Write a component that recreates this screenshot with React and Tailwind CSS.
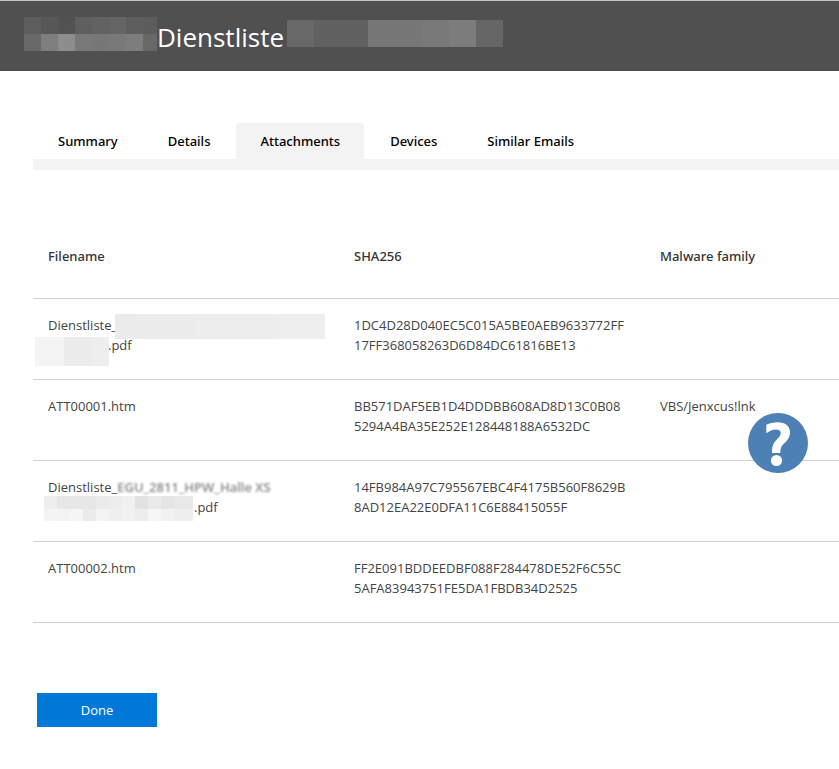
import React, { useState } from "react";

const tabs = ["Summary", "Details", "Attachments", "Devices", "Similar Emails"];

// mosaic tiles: [x, y, width, height, color]
const titleStart = [
  [0, 0, 17, 17, "#5d5d5d"],
  [17, 0, 17, 17, "#575757"],
  [34, 0, 17, 17, "#525252"],
  [51, 0, 17, 17, "#5f5f5f"],
  [68, 0, 17, 17, "#626262"],
  [85, 0, 17, 17, "#656565"],
  [102, 0, 17, 17, "#5e5e5e"],
  [119, 0, 14, 17, "#5c5c5c"],
  [0, 17, 17, 17, "#696969"],
  [17, 17, 17, 17, "#7e7e7e"],
  [34, 17, 17, 17, "#8d8d8d"],
  [51, 17, 17, 17, "#797979"],
  [68, 17, 17, 17, "#777777"],
  [85, 17, 17, 17, "#797979"],
  [102, 17, 17, 17, "#7d7d7d"],
  [119, 17, 14, 17, "#686868"],
];

const titleEnd = [
  [0, 0, 27, 27, "#686868"],
  [27, 0, 54, 27, "#616161"],
  [81, 0, 54, 27, "#777777"],
  [135, 0, 27, 27, "#797979"],
  [162, 0, 27, 27, "#7c7c7c"],
  [189, 0, 27, 27, "#666666"],
];

const firstNameEnd = [
  [0, 0, 27, 25, "#ebebeb"],
  [27, 0, 54, 25, "#ececec"],
  [81, 0, 81, 25, "#ededed"],
  [162, 0, 48, 25, "#eeeeee"],
];

const firstSecondLine = [
  [0, 0, 29, 29, "#f4f4f4"],
  [29, 0, 29, 29, "#ececec"],
  [58, 0, 16, 29, "#eeeeee"],
];

const thirdSecondLine = [
  [0, 0, 13, 13, "#eeeeee"],
  [13, 0, 39, 13, "#e7e7e7"],
  [52, 0, 13, 13, "#ebebeb"],
  [65, 0, 13, 13, "#ededed"],
  [78, 0, 13, 13, "#f1f1f1"],
  [91, 0, 13, 13, "#e2e2e2"],
  [104, 0, 13, 13, "#eaeaea"],
  [117, 0, 13, 13, "#e5e5e5"],
  [130, 0, 19, 13, "#e8e8e8"],
  [0, 13, 13, 12, "#f4f4f4"],
  [13, 13, 13, 12, "#f3f3f3"],
  [26, 13, 13, 12, "#f5f5f5"],
  [39, 13, 13, 12, "#ebebeb"],
  [52, 13, 13, 12, "#f4f4f4"],
  [65, 13, 13, 12, "#efefef"],
  [78, 13, 13, 12, "#f1f1f1"],
  [91, 13, 13, 12, "#ededed"],
  [104, 13, 13, 12, "#f6f6f6"],
  [117, 13, 13, 12, "#f2f2f2"],
  [130, 13, 19, 12, "#eeeeee"],
];

const Mosaic = ({ tiles, width, height, className }) => (
  <svg
    width={width}
    height={height}
    className={className}
    shapeRendering="crispEdges"
    aria-hidden="true"
  >
    {tiles.map(([x, y, w, h, color], i) => (
      <rect key={i} x={x} y={y} width={w} height={h} fill={color} />
    ))}
  </svg>
);

const HelpBadge = () => (
  <svg
    width="60"
    height="60"
    viewBox="0 0 60 60"
    className="absolute left-[103px] top-[33px] z-10"
    role="img"
    aria-label="Unknown"
  >
    <circle cx="30" cy="30" r="30" fill="#4d80b4" />
    <path
      d="M18.300 11.800C21.500 10 25.500 9.200 29.500 9.200C37.500 9.200 42 13 42 19.300C42 24.500 39.500 27.500 35.500 31C33 33.200 32.300 35.500 32.300 40H24C24 34 25 30.800 27.800 27.600C30.500 24.700 32.800 22.800 32.800 20C32.800 17.600 31 16.400 28 16.400C24.500 16.400 21.500 17.800 18.300 20.300Z"
      fill="#fff"
    />
    <circle cx="28.500" cy="47.500" r="5.600" fill="#fff" />
  </svg>
);

const rows = [
  {
    name: (
      <>
        Dienstliste_
        <Mosaic
          tiles={firstNameEnd}
          width={210}
          height={25}
          className="absolute left-[82px] top-[15px]"
        />
        <br />
        <Mosaic
          tiles={firstSecondLine}
          width={74}
          height={29}
          className="absolute left-[2px] top-[38px]"
        />
        <span className="pl-[60px]">.pdf</span>
      </>
    ),
    hash: ["1DC4D28D040EC5C015A5BE0AEB9633772FF", "17FF368058263D6D84DC61816BE13"],
  },
  {
    name: "ATT00001.htm",
    hash: ["BB571DAF5EB1D4DDDBB608AD8D13C0B08", "5294A4BA35E252E128448188A6532DC"],
    family: "VBS/Jenxcus!lnk",
    help: true,
  },
  {
    name: (
      <>
        Dienstliste_
        <span className="font-semibold text-[#888] blur-[1px]">
          EGU_2811_HPW_Halle XS
        </span>
        <br />
        <Mosaic
          tiles={thirdSecondLine}
          width={149}
          height={25}
          className="absolute left-[11px] top-[35px]"
        />
        <span className="pl-[146px]">.pdf</span>
      </>
    ),
    hash: ["14FB984A97C795567EBC4F4175B560F8629B", "8AD12EA22E0DFA11C6E88415055F"],
  },
  {
    name: "ATT00002.htm",
    hash: ["FF2E091BDDEEDBF088F284478DE52F6C55C", "5AFA83943751FE5DA1FBDB34D2525"],
  },
];

const App = () => {
  const [active, setActive] = useState("Attachments");

  return (
    <div className="min-h-screen bg-white pb-10 font-['Open_Sans','Noto_Sans',sans-serif] text-[13px] leading-5 text-[#444]">
      <header className="flex h-[71px] items-start border-t border-[#c0c4c4] bg-[#505050] pl-6">
        <Mosaic tiles={titleStart} width={133} height={34} className="mt-4 shrink-0" />
        <h1 className="mt-[18px] text-[26px] leading-9 text-white">Dienstliste</h1>
        <Mosaic tiles={titleEnd} width={216} height={27} className="ml-[3px] mt-[19px] shrink-0" />
      </header>

      <main className="pl-[33px] pt-[52px]">
        <nav
          role="tablist"
          className="flex gap-0.5 border-b-[11px] border-[#f3f3f3] pl-px font-['Noto_Sans','Open_Sans',sans-serif]"
        >
          {tabs.map((tab) => (
            <button
              key={tab}
              role="tab"
              aria-selected={active === tab}
              onClick={() => setActive(tab)}
              className={`h-9 rounded-t px-6 font-medium text-black ${
                active === tab ? "bg-[#f3f3f3]" : ""
              }`}
            >
              {tab}
            </button>
          ))}
        </nav>

        <table className="mt-[60px] w-full table-fixed text-left">
          <thead>
            <tr className="border-b border-[#d0d0d0] font-['Noto_Sans','Open_Sans',sans-serif] text-[#333]">
              <th className="w-[306px] px-[15px] pb-8 pt-4 font-medium">Filename</th>
              <th className="w-[306px] px-[15px] pb-8 pt-4 font-medium">SHA256</th>
              <th className="px-[15px] pb-8 pt-4 font-medium">Malware family</th>
            </tr>
          </thead>
          <tbody>
            {rows.map((row, i) => (
              <tr key={i} className="border-b border-[#d0d0d0] align-top">
                <td className="relative whitespace-nowrap px-[15px] pb-6 pt-4">
                  {row.name}
                </td>
                <td className="px-[15px] pb-6 pt-4">
                  {row.hash[0]}
                  <br />
                  {row.hash[1]}
                </td>
                <td className="relative px-[15px] pb-6 pt-4">
                  {row.family}
                  {row.help && <HelpBadge />}
                </td>
              </tr>
            ))}
          </tbody>
        </table>

        <button className="ml-1 mt-[70px] h-[34px] w-[120px] bg-[#0078d7] text-white">
          Done
        </button>
      </main>
    </div>
  );
};

export default App;
